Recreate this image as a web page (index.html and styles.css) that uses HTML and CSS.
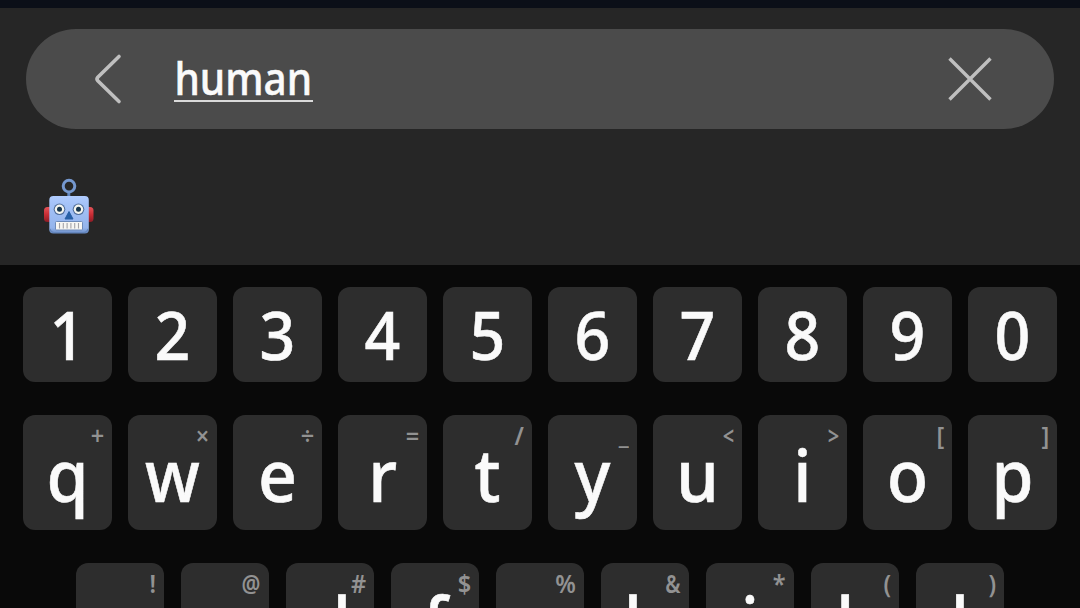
FILE: index.html
```html
<!DOCTYPE html>
<html lang="en">
<head>
<meta charset="utf-8">
<title>Emoji search</title>
<link rel="stylesheet" href="styles.css">
</head>
<body>
<main class="screen">
  <section class="panel">
    <div class="search">
      <svg class="back" width="30" height="52" viewBox="0 0 30 52"><path d="M27 3.5 5.8 24.2Q4.2 26 5.8 27.8L27 48.5"/></svg>
      <span class="query"><span class="query-text">human</span></span>
      <svg class="clear" width="44" height="44" viewBox="0 0 44 44"><path d="M1.5 1.5 42.5 42.5M42.5 1.5 1.5 42.5"/></svg>
    </div>
    <div class="results">
      <svg class="robot" width="52" height="58" viewBox="0 0 52 58">
        <defs>
          <linearGradient id="face" x1="0" y1="0" x2="0" y2="1"><stop offset="0" stop-color="#b0ccff"/><stop offset=".2" stop-color="#a5c3f8"/><stop offset=".85" stop-color="#94b4ec"/><stop offset="1" stop-color="#688bc5"/></linearGradient>
          <linearGradient id="ear" x1="0" y1="0" x2="0" y2="1"><stop offset="0" stop-color="#e45358"/><stop offset=".5" stop-color="#c92d35"/><stop offset="1" stop-color="#8d1c25"/></linearGradient>
        </defs>
        <rect x="1" y="29" width="12" height="15" rx="3.5" fill="url(#ear)"/>
        <rect x="38.5" y="29" width="12" height="15" rx="3.5" fill="url(#ear)"/>
        <path d="M25.8 14v7" stroke="#6285bb" stroke-width="3"/>
        <circle cx="26" cy="8.1" r="5.8" fill="none" stroke="#7598cf" stroke-width="3"/>
        <rect x="6.3" y="18" width="39.5" height="37.5" rx="4" fill="url(#face)"/>
        <path d="M7 51q1 3.5 4 3.5h30q3 0 4-3.5" fill="none" stroke="#6486bd" stroke-width="1.2"/>
        <circle cx="16.5" cy="31.3" r="5.8" fill="#536f9b"/><circle cx="16.5" cy="31.3" r="4.7" fill="#f5f6ef"/><circle cx="16.5" cy="31.3" r="2.5" fill="#17364f"/>
        <circle cx="35.5" cy="31.3" r="5.8" fill="#536f9b"/><circle cx="35.5" cy="31.3" r="4.7" fill="#f5f6ef"/><circle cx="35.5" cy="31.3" r="2.5" fill="#17364f"/>
        <path d="M26 33.5 30 41H22z" fill="#2860a6" stroke="#2860a6" stroke-linejoin="round"/>
        <rect x="12.5" y="43.5" width="27" height="8.5" rx="1" fill="#f7f6f3" stroke="#6e8bb9" stroke-width="1"/>
        <path d="M16.5 45v5.5M20.3 45v5.5M24.1 45v5.5M27.9 45v5.5M31.7 45v5.5M35.5 45v5.5" stroke="#a4a3a7" stroke-width="1.1"/>
      </svg>
    </div>
  </section>
  <section class="keyboard">
    <div class="row digits">
      <div class="key"><span class="glyph">1</span></div>
      <div class="key"><span class="glyph">2</span></div>
      <div class="key"><span class="glyph">3</span></div>
      <div class="key"><span class="glyph">4</span></div>
      <div class="key"><span class="glyph">5</span></div>
      <div class="key"><span class="glyph">6</span></div>
      <div class="key"><span class="glyph">7</span></div>
      <div class="key"><span class="glyph">8</span></div>
      <div class="key"><span class="glyph">9</span></div>
      <div class="key"><span class="glyph">0</span></div>
    </div>
    <div class="row letters">
      <div class="key"><span class="glyph">q</span><span class="hint">+</span></div>
      <div class="key"><span class="glyph">w</span><span class="hint">×</span></div>
      <div class="key"><span class="glyph">e</span><span class="hint">÷</span></div>
      <div class="key"><span class="glyph">r</span><span class="hint">=</span></div>
      <div class="key"><span class="glyph">t</span><span class="hint">/</span></div>
      <div class="key"><span class="glyph">y</span><span class="hint low">_</span></div>
      <div class="key"><span class="glyph">u</span><span class="hint angle">&lt;</span></div>
      <div class="key"><span class="glyph">i</span><span class="hint angle">&gt;</span></div>
      <div class="key"><span class="glyph">o</span><span class="hint">[</span></div>
      <div class="key"><span class="glyph">p</span><span class="hint">]</span></div>
    </div>
    <div class="row letters home">
      <div class="key"><span class="glyph">a</span><span class="hint">!</span></div>
      <div class="key"><span class="glyph">s</span><span class="hint at">@</span></div>
      <div class="key"><span class="glyph">d</span><span class="hint">#</span></div>
      <div class="key"><span class="glyph">f</span><span class="hint">$</span></div>
      <div class="key"><span class="glyph">g</span><span class="hint">%</span></div>
      <div class="key"><span class="glyph">h</span><span class="hint amp">&amp;</span></div>
      <div class="key"><span class="glyph">j</span><span class="hint">*</span></div>
      <div class="key"><span class="glyph">k</span><span class="hint">(</span></div>
      <div class="key"><span class="glyph">l</span><span class="hint">)</span></div>
    </div>
  </section>
</main>
</body>
</html>
```
FILE: styles.css
```css
* { box-sizing: border-box; }
body { margin: 0; background: #090909; font-family: "Noto Sans", "Open Sans", sans-serif; }
.screen { width: 1080px; height: 608px; overflow: hidden; display: flex; flex-direction: column; }
.panel { flex: none; height: 265px; background: #262626; border-top: 8px solid #0b0f18; padding: 21px 26px 0; }
.search { height: 100px; border-radius: 50px; background: #4b4b4b; display: flex; align-items: center; padding: 0 62.5px 0 66px; }
.back, .clear { flex: none; fill: none; stroke: #bfbfbf; }
.back { stroke-width: 3.6; stroke-linecap: round; }
.clear { stroke-width: 3.4; margin-left: auto; }
.query { width: 139px; height: 44px; margin: 2px 0 0 52px; border-bottom: 2px solid #dadada; display: flex; justify-content: center; }
.query-text { color: #fafafa; font-size: 46px; font-weight: 500; -webkit-text-stroke: .5px #fafafa; line-height: 39px; transform: scaleX(.88); }
.results { display: flex; padding: 49px 0 0 17px; }
.robot { display: block; }
.keyboard { flex: none; padding: 22px 23px 0; }
.row { display: flex; gap: 16px; margin-bottom: 33px; }
.key { position: relative; flex: none; width: 89px; border-radius: 12px; background: #2d2d2d; color: #fafafa; text-align: center; font-weight: 500; }
.digits .key { height: 95px; font-size: 68px; line-height: 94px; }
.digits .glyph { transform: scaleX(.92); }
.letters .key { height: 115px; font-size: 73px; line-height: 117px; }
.home { gap: 17px; padding-left: 53px; }
.home .key { width: 88px; }
.glyph { display: block; transform: scaleX(.93); -webkit-text-stroke: .6px #fafafa; }
.hint { position: absolute; top: 0; right: 8px; color: #929292; font-size: 25px; font-weight: 600; line-height: 41px; transform: scaleX(.94); transform-origin: right; }
.low { top: -1px; }
.angle { transform: scaleX(.8); }
.at { right: 9px; transform: scaleX(.84); }
.amp { transform: scaleX(.82); }
```
